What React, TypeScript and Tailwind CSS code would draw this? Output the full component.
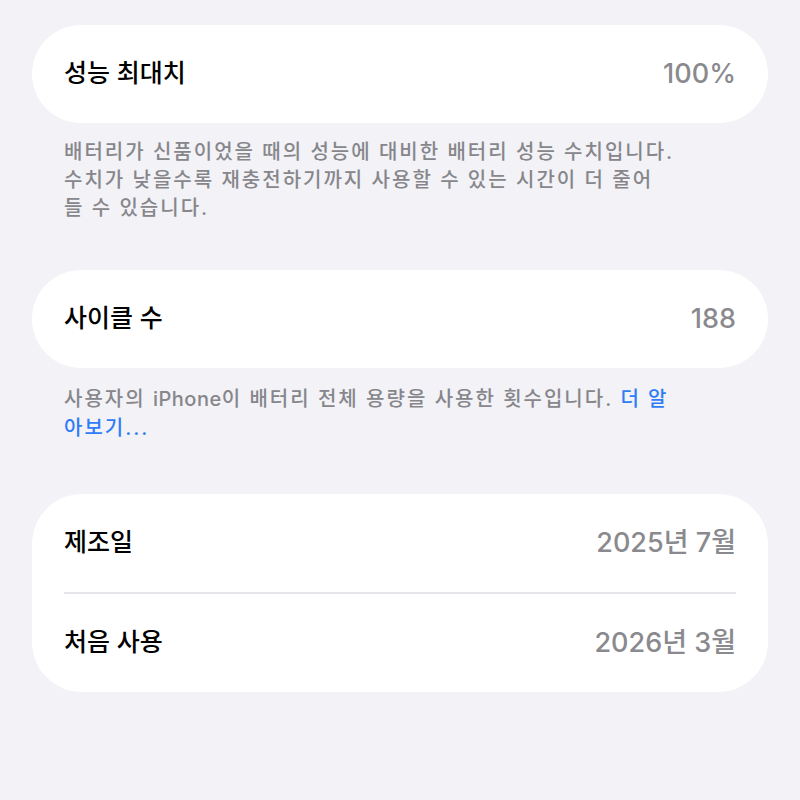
import React from 'react';

const FONT = { fontFamily: '"Inter", "Noto Sans CJK KR", "Noto Sans", sans-serif' };

function Row({ label, value }: { label: string; value: string }) {
  return (
    <div className="flex h-[98px] items-center justify-between px-8">
      <span className="text-[25px] font-medium text-black">{label}</span>
      <span className="text-[27px] font-medium text-[#8a8a8e]">{value}</span>
    </div>
  );
}

export default function App() {
  return (
    <div className="min-h-screen w-full bg-[#f2f2f7] px-8 pt-[25px]" style={FONT}>
      <div className="rounded-[49px] bg-white">
        <Row label="성능 최대치" value="100%" />
      </div>
      <p className="px-8 pt-[15px] text-[20px] font-medium leading-[28px] tracking-[2px] text-[#86868b]">
        배터리가 신품이었을 때의 성능에 대비한 배터리 성능 수치입니다.
        <br />
        수치가 낮을수록 재충전하기까지 사용할 수 있는 시간이 더 줄어
        <br />
        들 수 있습니다.
      </p>

      <div className="mt-[48px] rounded-[49px] bg-white">
        <Row label="사이클 수" value="188" />
      </div>
      <p className="px-8 pt-[17px] text-[20px] font-medium leading-[29px] tracking-[2px] text-[#86868b]">
        사용자의 <span className="tracking-[0.5px]">iPhone</span>이 배터리 전체 용량을 사용한 횟수입니다.{' '}
        <span className="text-[#2f7cf6]">더 알</span>
        <br />
        <span className="text-[#2f7cf6]">아보기...</span>
      </p>

      <div className="mt-[51px] rounded-[50px] bg-white">
        <Row label="제조일" value="2025년 7월" />
        <div className="mx-8 h-[2px] bg-[#e5e5ea]" />
        <Row label="처음 사용" value="2026년 3월" />
      </div>
    </div>
  );
}
